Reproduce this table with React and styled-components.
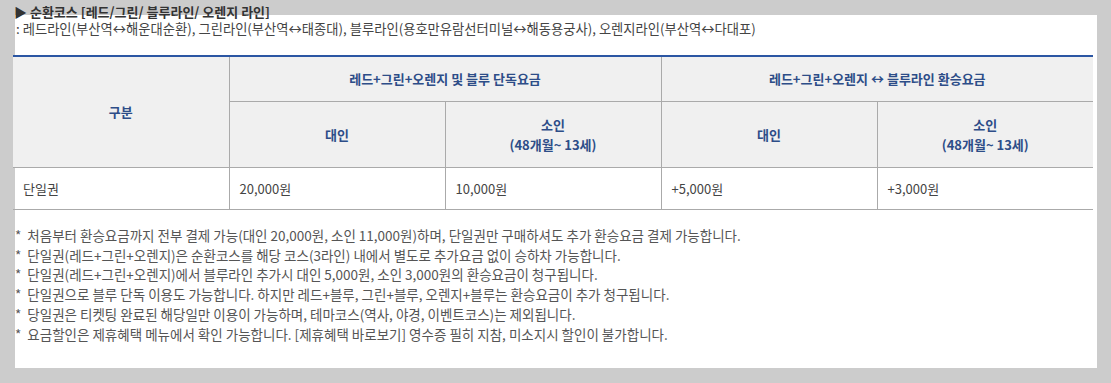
import React from "react";
import styled, { createGlobalStyle } from "styled-components";

const GlobalStyle = createGlobalStyle`
  html, body {
    margin: 0;
    padding: 0;
    background: #cccccc;
  }
  body {
    font-family: "Noto Sans CJK KR", "Noto Sans", sans-serif;
    color: #444;
  }
`;

const Page = styled.div`
  padding: 15px 14px 15px 15px;
  width: 1111px;
  box-sizing: border-box;
`;

const Panel = styled.div`
  display: flow-root;
  background: #fff;
  height: 353px;
  box-sizing: border-box;
`;

const Title = styled.h3`
  margin: -11px 0 0 -1px;
  font-size: 13px;
  line-height: 16px;
  font-weight: 700;
  color: #333;
`;

const Desc = styled.p`
  margin: 0 0 17px 1px;
  font-size: 13.3px;
  line-height: 18px;
  color: #444;
  white-space: nowrap;
`;

const Table = styled.table`
  margin-left: -2px;
  width: 1080px;
  border-collapse: collapse;
  table-layout: fixed;
  border-top: 2px solid #2b56a3;
  font-size: 13px;
`;

const Th = styled.th`
  background: #f0f0f0;
  color: #2d4d88;
  font-weight: 700;
  height: ${(p) => p.$h || 44}px;
  line-height: 20px;
  padding: 0;
  border-bottom: 1px solid #aaa;
  border-left: ${(p) => (p.$first ? "none" : "1px solid #aaa")};
`;

const Td = styled.td`
  height: 41px;
  padding: 0 10px;
  color: #444;
  border-bottom: 1px solid #aaa;
  border-left: ${(p) => (p.$first ? "none" : "1px solid #aaa")};
`;

const Notes = styled.ul`
  list-style: none;
  margin: 16px 0 0 0;
  padding: 0;
  font-size: 13.5px;
  line-height: 19.7px;
  color: #555;
`;

const Note = styled.li`
  white-space: nowrap;
  &::before {
    content: "*";
    margin-right: 6px;
  }
`;

const notes = [
  "처음부터 환승요금까지 전부 결제 가능(대인 20,000원, 소인 11,000원)하며, 단일권만 구매하셔도 추가 환승요금 결제 가능합니다.",
  "단일권(레드+그린+오렌지)은 순환코스를 해당 코스(3라인) 내에서 별도로 추가요금 없이 승하차 가능합니다.",
  "단일권(레드+그린+오렌지)에서 블루라인 추가시 대인 5,000원, 소인 3,000원의 환승요금이 청구됩니다.",
  "단일권으로 블루 단독 이용도 가능합니다. 하지만 레드+블루, 그린+블루, 오렌지+블루는 환승요금이 추가 청구됩니다.",
  "당일권은 티켓팅 완료된 해당일만 이용이 가능하며, 테마코스(역사, 야경, 이벤트코스)는 제외됩니다.",
  "요금할인은 제휴혜택 메뉴에서 확인 가능합니다. [제휴혜택 바로보기] 영수증 필히 지참, 미소지시 할인이 불가합니다.",
];

export default function App() {
  return (
    <Page>
      <GlobalStyle />
      <Panel>
        <Title>▶ 순환코스 [레드/그린/ 블루라인/ 오렌지 라인]</Title>
        <Desc>
          : 레드라인(부산역↔해운대순환), 그린라인(부산역↔태종대), 블루라인(용호만유람선터미널↔해동용궁사), 오렌지라인(부산역↔다대포)
        </Desc>
        <Table>
          <thead>
            <tr>
              <Th $first rowSpan={2}>구분</Th>
              <Th colSpan={2}>레드+그린+오렌지 및 블루 단독요금</Th>
              <Th colSpan={2}>레드+그린+오렌지 ↔ 블루라인 환승요금</Th>
            </tr>
            <tr>
              <Th $h={65}>대인</Th>
              <Th $h={65}>소인<br />(48개월~ 13세)</Th>
              <Th $h={65}>대인</Th>
              <Th $h={65}>소인<br />(48개월~ 13세)</Th>
            </tr>
          </thead>
          <tbody>
            <tr>
              <Td $first>단일권</Td>
              <Td>20,000원</Td>
              <Td>10,000원</Td>
              <Td>+5,000원</Td>
              <Td>+3,000원</Td>
            </tr>
          </tbody>
        </Table>
        <Notes>
          {notes.map((n) => (
            <Note key={n}>{n}</Note>
          ))}
        </Notes>
      </Panel>
    </Page>
  );
}
